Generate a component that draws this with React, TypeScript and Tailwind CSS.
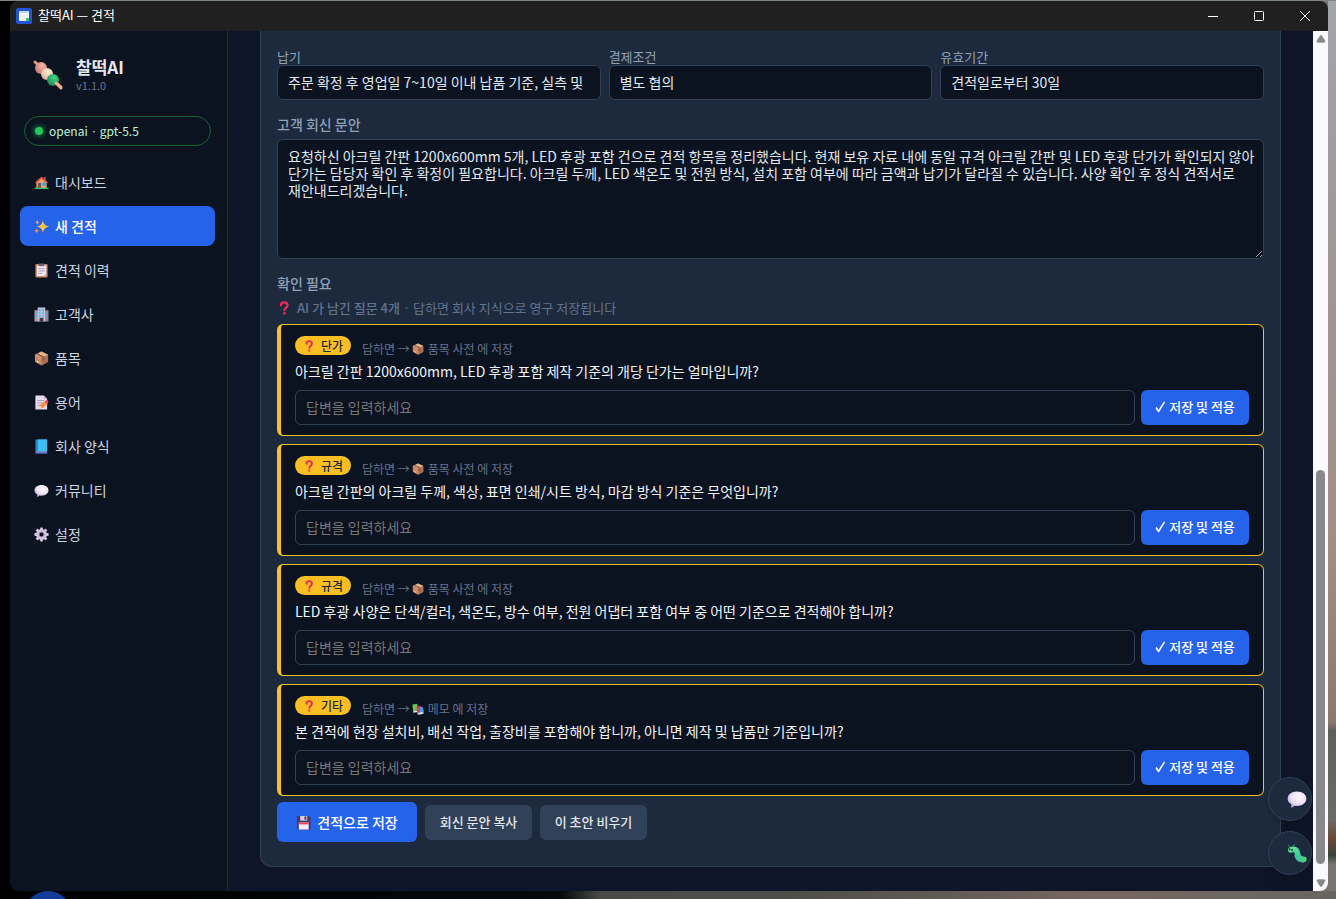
import React, { useState } from 'react';
import clsx from 'clsx';

type IconProps = { className?: string };

const HouseIcon = ({ className }: IconProps) => (
    <svg viewBox="0 0 32 32" className={className} aria-hidden="true">
        <rect x="21" y="4" width="4" height="9" fill="#8d5b4c" />
        <path d="M5 14 16 5l11 9v14H5z" fill="#e8a66f" />
        <path d="M2 16 16 3l14 13-2 2L16 8 4 18z" fill="#e5484d" />
        <rect x="8" y="17" width="7" height="11" fill="#7c5147" />
        <rect x="18" y="16" width="7" height="7" fill="#2ea8f5" />
        <rect x="1" y="27" width="30" height="3" fill="#35c46b" />
    </svg>
);

const SparklesIcon = ({ className }: IconProps) => (
    <svg viewBox="0 0 32 32" className={className} aria-hidden="true">
        <path d="M19 2c1.500 9 4 11.500 13 14-9 2.500-11.500 5-13 14-1.500-9-4-11.500-13-14 9-2.500 11.500-5 13-14z" fill="#ffc24b" />
        <path d="M7 1c.7 4 2 5 5 6-3 1-4.300 2-5 6-.7-4-2-5-5-6 3-1 4.300-2 5-6z" fill="#ff9a5c" />
        <path d="M6 19c.7 4 2 5 6 6-4 1-5.300 2-6 6-.7-4-2-5-6-6 4-1 5.300-2 6-6z" fill="#ff8a5c" />
    </svg>
);

const ClipboardIcon = ({ className }: IconProps) => (
    <svg viewBox="0 0 32 32" className={className} aria-hidden="true">
        <rect x="3" y="2" width="26" height="29" rx="2" fill="#c9835a" />
        <rect x="6" y="5" width="20" height="23" fill="#f0e8f8" />
        <rect x="10" y="1" width="12" height="6" rx="1" fill="#6a6078" />
        <path d="M9 12h14M9 17h14M9 22h9" stroke="#a79bb8" strokeWidth="2" />
        <path d="M20 28h6v-6z" fill="#c3b4d4" />
    </svg>
);

const OfficeIcon = ({ className }: IconProps) => (
    <svg viewBox="0 0 32 32" className={className} aria-hidden="true">
        <rect x="1" y="7" width="9" height="24" fill="#a89fb2" />
        <rect x="22" y="7" width="9" height="24" fill="#8e8699" />
        <rect x="8" y="1" width="16" height="30" fill="#c8bfd2" />
        <path d="M11 5h3v4h-3zM18 5h3v4h-3zM11 11h3v4h-3zM18 11h3v4h-3zM11 17h3v4h-3zM18 17h3v4h-3zM3 11h3v4H3zM26 11h3v4h-3zM3 18h3v4H3zM26 18h3v4h-3z" fill="#2fb4f3" />
        <rect x="12" y="23" width="8" height="8" fill="#403850" />
    </svg>
);

const PackageIcon = ({ className }: IconProps) => (
    <svg viewBox="0 0 32 32" className={className} aria-hidden="true">
        <path d="M16 1 30 8v15l-14 8L2 23V8z" fill="#c88b63" />
        <path d="M16 1 30 8l-14 7L2 8z" fill="#e6b48c" />
        <path d="M16 15 30 8v15l-14 8z" fill="#ad6f50" />
        <path d="m8 5 14 7v7l-4 2v-7L4 7z" fill="#8c5844" />
        <path d="m6 21 4 2v3l-4-2z" fill="#f4dfc9" />
    </svg>
);

const MemoIcon = ({ className }: IconProps) => (
    <svg viewBox="0 0 32 32" className={className} aria-hidden="true">
        <path d="M3 1h18l7 7v23H3z" fill="#e6dcef" />
        <path d="M21 1v7h7z" fill="#b5a8c4" />
        <path d="M7 12h15M7 17h14M7 22h9" stroke="#a99bb9" strokeWidth="2" />
        <path d="m11 29 3-8 11-9 5 5-11 10z" fill="#ff8b32" />
        <path d="m23 14 3-3c2-2 6 2 4 4l-3 3z" fill="#f0495c" />
        <path d="m11 29 2-6 4 4z" fill="#ffd09a" />
    </svg>
);

const BlueBookIcon = ({ className }: IconProps) => (
    <svg viewBox="0 0 32 32" className={className} aria-hidden="true">
        <path d="M3 1h25v30H3z" fill="#2587c7" />
        <path d="M8 1h20v25H8z" fill="#3fbdf5" />
        <path d="M4 26h24v3H4z" fill="#8f8fd0" />
        <path d="M4 29h24v2H4z" fill="#5563b8" />
    </svg>
);

const SpeechIcon = ({ className }: IconProps) => (
    <svg viewBox="0 0 32 32" className={className} aria-hidden="true">
        <defs>
            <radialGradient id="speech" cx="0.6" cy="0.35" r="0.7">
                <stop offset="0" stopColor="#fff8ff" />
                <stop offset="0.6" stopColor="#ede0f6" />
                <stop offset="1" stopColor="#b9a3d3" />
            </radialGradient>
        </defs>
        <path d="M16 4c9 0 15 5 15 11.500S25 27 16 27c-1.500 0-3 0-4.300-.4C10.500 28 8 29.500 6 29.500c1-1.500 1.300-3.500 1-5C3 22.500 1 19.500 1 15.500 1 9 7 4 16 4z" fill="url(#speech)" />
    </svg>
);

const GearIcon = ({ className }: IconProps) => (
    <svg viewBox="0 0 32 32" className={className} aria-hidden="true">
        <g fill="#cfc3dd">
            <rect x="13" y="1" width="6" height="30" rx="1" />
            <rect x="13" y="1" width="6" height="30" rx="1" transform="rotate(45 16 16)" />
            <rect x="13" y="1" width="6" height="30" rx="1" transform="rotate(90 16 16)" />
            <rect x="13" y="1" width="6" height="30" rx="1" transform="rotate(135 16 16)" />
        </g>
        <circle cx="16" cy="16" r="8" fill="none" stroke="#cfc3dd" strokeWidth="7" />
        <circle cx="16" cy="16" r="5" fill="#0b1220" stroke="#8f829f" strokeWidth="2" />
    </svg>
);

const QuestionIcon = ({ className }: IconProps) => (
    <svg viewBox="0 0 32 32" className={className} aria-hidden="true">
        <path d="M9 10c0-4 3-7 7.500-7S24 6 24 10c0 5-7 5.500-7 11" fill="none" stroke="#f0285a" strokeWidth="5" strokeLinecap="round" />
        <circle cx="17" cy="28" r="3" fill="#f0285a" />
    </svg>
);

const BooksIcon = ({ className }: IconProps) => (
    <svg viewBox="0 0 32 32" className={className} aria-hidden="true">
        <path d="M1 4 14 2l2 18-13 2z" fill="#62c554" />
        <path d="M3 22 16 20v4L4 26z" fill="#e9e2f2" />
        <path d="m12 9 11-2 3 17-12 2z" fill="#e5345f" />
        <path d="m21 11 8-1 3 18-10 2z" fill="#3f9fe8" />
        <path d="m14 26 14-2 1 5-13 2z" fill="#d9e7f5" />
    </svg>
);

const FloppyIcon = ({ className }: IconProps) => (
    <svg viewBox="0 0 32 32" className={className} aria-hidden="true">
        <path d="M2 2h26l3 3v26H2z" fill="#4b3b63" />
        <rect x="9" y="2" width="15" height="10" fill="#d8cfe2" />
        <rect x="18" y="3" width="4" height="7" fill="#4b3b63" />
        <rect x="6" y="16" width="21" height="15" fill="#f3ebfa" />
        <rect x="6" y="16" width="21" height="4" fill="#e8446e" />
    </svg>
);

const DangoIcon = ({ className }: IconProps) => (
    <svg viewBox="0 0 32 32" className={className} aria-hidden="true">
        <defs>
            <radialGradient id="dangoPink" cx="0.6" cy="0.3" r="0.8">
                <stop offset="0" stopColor="#f6b3a4" />
                <stop offset="1" stopColor="#c96f77" />
            </radialGradient>
            <radialGradient id="dangoCream" cx="0.6" cy="0.3" r="0.8">
                <stop offset="0" stopColor="#fff0cf" />
                <stop offset="1" stopColor="#d8a99a" />
            </radialGradient>
            <radialGradient id="dangoGreen" cx="0.6" cy="0.3" r="0.8">
                <stop offset="0" stopColor="#3ddc84" />
                <stop offset="1" stopColor="#1c7a55" />
            </radialGradient>
        </defs>
        <path d="M3 3 29 28" stroke="#dd9a78" strokeWidth="3" strokeLinecap="round" />
        <circle cx="9" cy="9" r="6" fill="url(#dangoPink)" />
        <circle cx="15" cy="15" r="6" fill="url(#dangoCream)" />
        <circle cx="21" cy="21" r="6" fill="url(#dangoGreen)" />
        <path d="m24 24 5 5" stroke="#f0b18d" strokeWidth="3" strokeLinecap="round" />
    </svg>
);

const BugIcon = ({ className }: IconProps) => (
    <svg viewBox="0 0 32 32" className={className} aria-hidden="true">
        <defs>
            <linearGradient id="bug" x1="0" y1="0" x2="1" y2="1">
                <stop offset="0" stopColor="#5ee08a" />
                <stop offset="0.6" stopColor="#3cc8a0" />
                <stop offset="1" stopColor="#4bd07c" />
            </linearGradient>
        </defs>
        <path d="M5 8 2 3M7 7l5-5" stroke="#3a8f78" strokeWidth="1.500" strokeLinecap="round" />
        <path d="M13 19c1 7 4 10 14 11" fill="none" stroke="#5a9fc9" strokeWidth="3" />
        <path d="M6 11c7-2 10 0 11 7 1 6 4 8 10 8" fill="none" stroke="url(#bug)" strokeWidth="9" strokeLinecap="round" />
        <circle cx="4" cy="10" r="1.500" fill="#1e293b" />
        <circle cx="8" cy="11" r="1.500" fill="#1e293b" />
    </svg>
);

const CheckIcon = ({ className }: IconProps) => (
    <svg viewBox="0 0 10 12" className={className} fill="none" stroke="currentColor" strokeLinejoin="round" aria-hidden="true">
        <path d="M1 6.500 3.500 10.500 9.500 1" strokeWidth="1.500" />
    </svg>
);

const menus = [
    { name: '대시보드', icon: HouseIcon },
    { name: '새 견적', icon: SparklesIcon },
    { name: '견적 이력', icon: ClipboardIcon },
    { name: '고객사', icon: OfficeIcon },
    { name: '품목', icon: PackageIcon },
    { name: '용어', icon: MemoIcon },
    { name: '회사 양식', icon: BlueBookIcon },
    { name: '커뮤니티', icon: SpeechIcon },
    { name: '설정', icon: GearIcon },
];

const terms = [
    { id: 'delivery', label: '납기', value: '주문 확정 후 영업일 7~10일 이내 납품 기준, 실측 및' },
    { id: 'payment', label: '결제조건', value: '별도 협의' },
    { id: 'validity', label: '유효기간', value: '견적일로부터 30일' },
];

const replyText =
    '요청하신 아크릴 간판 1200x600mm 5개, LED 후광 포함 건으로 견적 항목을 정리했습니다. 현재 보유 자료 내에 동일 규격 아크릴 간판 및 LED 후광 단가가 확인되지 않아 단가는 담당자 확인 후 확정이 필요합니다. 아크릴 두께, LED 색온도 및 전원 방식, 설치 포함 여부에 따라 금액과 납기가 달라질 수 있습니다. 사양 확인 후 정식 견적서로 재안내드리겠습니다.';

interface Question {
    id: string;
    tag: string;
    target: string;
    icon: React.FC<IconProps>;
    text: string;
}

const questions: Question[] = [
    { id: 'q1', tag: '단가', target: '품목 사전 에 저장', icon: PackageIcon, text: '아크릴 간판 1200x600mm, LED 후광 포함 제작 기준의 개당 단가는 얼마입니까?' },
    { id: 'q2', tag: '규격', target: '품목 사전 에 저장', icon: PackageIcon, text: '아크릴 간판의 아크릴 두께, 색상, 표면 인쇄/시트 방식, 마감 방식 기준은 무엇입니까?' },
    { id: 'q3', tag: '규격', target: '품목 사전 에 저장', icon: PackageIcon, text: 'LED 후광 사양은 단색/컬러, 색온도, 방수 여부, 전원 어댑터 포함 여부 중 어떤 기준으로 견적해야 합니까?' },
    { id: 'q4', tag: '기타', target: '메모 에 저장', icon: BooksIcon, text: '본 견적에 현장 설치비, 배선 작업, 출장비를 포함해야 합니까, 아니면 제작 및 납품만 기준입니까?' },
];

const TitleBar = () => (
    <header className="flex h-[30px] shrink-0 items-center bg-[#202020] pl-1.5 text-white">
        <svg viewBox="0 0 16 16" className="h-4 w-4" aria-hidden="true">
            <rect width="16" height="16" rx="2" fill="#2355d8" />
            <rect x="3" y="3" width="10" height="10" rx="1" fill="#f1f5fb" />
            <rect x="3" y="3" width="10" height="2" fill="#c7d7f7" />
            <rect x="10" y="10" width="3" height="3" fill="#35c46b" />
        </svg>
        <span className="ml-1.5 pb-0.5 text-[13px]">찰떡AI — 견적</span>
        <div className="ml-auto flex h-full">
            <button type="button" aria-label="최소화" className="flex w-[46px] items-center justify-center">
                <svg viewBox="0 0 10 10" className="h-2.5 w-2.5" stroke="white"><path d="M0 5.500h10" /></svg>
            </button>
            <button type="button" aria-label="최대화" className="flex w-[46px] items-center justify-center">
                <svg viewBox="0 0 10 10" className="h-2.5 w-2.5" fill="none" stroke="white"><rect x="0.500" y="0.500" width="9" height="9" rx="1" /></svg>
            </button>
            <button type="button" aria-label="닫기" className="flex w-[46px] items-center justify-center">
                <svg viewBox="0 0 10 10" className="h-2.5 w-2.5" stroke="white"><path d="m0 0 10 10M10 0 0 10" /></svg>
            </button>
        </div>
    </header>
);

const Sidebar = () => {
    const [active, setActive] = useState('새 견적');

    return (
        <aside className="w-[218px] shrink-0 border-r border-[#1e293b] bg-[#0b1220] pr-3 pl-2.5">
            <div className="flex items-start px-3 pt-6">
                <DangoIcon className="mt-1 h-8 w-8" />
                <div className="ml-3">
                    <div className="text-[17px] leading-6 font-bold text-slate-200">찰떡AI</div>
                    <div className="text-[11px] leading-3 text-slate-500">v1.1.0</div>
                </div>
            </div>
            <div className="mx-1 mt-[25px] flex h-[30px] items-center rounded-full border border-[#166534] px-2.5 text-xs text-[#bbf7d0]">
                <span className="h-2 w-2 rounded-full bg-[#22c55e] shadow-[0_0_6px_#22c55e]" />
                <span className="ml-1.5">openai · gpt-5.5</span>
            </div>
            <nav className="mt-4 flex flex-col gap-1">
                {menus.map(({ name, icon: Icon }) => (
                    <a
                        key={name}
                        href="#"
                        onClick={() => setActive(name)}
                        className={clsx(
                            'flex h-10 items-center gap-1.5 rounded-lg px-3.5 text-sm',
                            active === name ? 'bg-[#2563eb] font-medium text-white' : 'text-slate-300'
                        )}
                    >
                        <Icon className="h-[15px] w-[15px]" />
                        {name}
                    </a>
                ))}
            </nav>
        </aside>
    );
};

const QuestionCard = ({ question }: { question: Question }) => {
    const [answer, setAnswer] = useState('');
    const Icon = question.icon;

    return (
        <li className="rounded-md border border-l-4 border-[#fbbf24] bg-[#0b1220] px-3.5 pt-[11px] pb-2.5">
            <div className="flex h-6 items-start">
                <span className="flex h-[19px] w-14 items-center gap-1.5 rounded-full bg-[#fbbf24] pl-2 text-xs font-medium text-[#1e293b]">
                    <QuestionIcon className="h-3 w-3" />
                    {question.tag}
                </span>
                <span className="ml-[11px] flex items-center self-end text-xs leading-[22px] text-slate-500">
                    답하면 →
                    <Icon className="mr-1 ml-0.5 h-3 w-3" />
                    {question.target}
                </span>
            </div>
            <label htmlFor={question.id} className="mb-2 block text-sm leading-[22px] text-slate-100">{question.text}</label>
            <div className="flex gap-1.5">
                <input
                    id={question.id}
                    value={answer}
                    onChange={(e) => setAnswer(e.target.value)}
                    placeholder="답변을 입력하세요"
                    className="h-[35px] min-w-0 flex-1 rounded-md border border-slate-700 bg-[#0b1220] px-2.5 pb-0.5 text-sm text-slate-200 placeholder:text-[#757575]"
                />
                <button type="button" className="flex h-[35px] w-[108px] items-center justify-center gap-1 rounded-md bg-[#2563eb] pb-0.5 text-[13px] font-medium text-white">
                    <CheckIcon className="h-3 w-2.5" />
                    저장 및 적용
                </button>
            </div>
        </li>
    );
};

const QuoteForm = () => {
    const [reply, setReply] = useState(replyText);

    return (
        <form onSubmit={(e) => e.preventDefault()} className="rounded-b-xl border border-t-0 border-slate-700 bg-slate-800 px-4 pt-[18px] pb-6">
            <div className="grid grid-cols-3 gap-2">
                {terms.map(term => (
                    <div key={term.id}>
                        <label htmlFor={term.id} className="block text-[13px] leading-4 text-slate-400">{term.label}</label>
                        <input
                            id={term.id}
                            defaultValue={term.value}
                            className="h-[35px] w-full rounded-md border border-slate-700 bg-[#0b1220] px-2.5 pb-0.5 text-sm text-slate-200"
                        />
                    </div>
                ))}
            </div>

            <label htmlFor="reply" className="mt-3 mb-[3px] block text-sm leading-6 font-medium text-slate-400">고객 회신 문안</label>
            <textarea
                id="reply"
                value={reply}
                onChange={(e) => setReply(e.target.value)}
                className="block h-[120px] w-full resize-y rounded-md border border-slate-700 bg-[#0b1220] py-2 pr-1.5 pl-2.5 text-sm leading-[17px] break-keep text-slate-200"
            />

            <h3 className="mt-3 text-sm leading-6 font-medium text-slate-400">확인 필요</h3>
            <p className="mb-[3px] flex items-center text-[13px] leading-[26px] text-slate-500">
                <QuestionIcon className="mr-1.5 h-3.5 w-3.5" />
                <span className="whitespace-pre"><b className="font-medium">AI 가 남긴 질문 4개</b> · 답하면 회사 지식으로 영구 저장됩니다</span>
            </p>
            <ul className="flex flex-col gap-2">
                {questions.map(question => (
                    <QuestionCard key={question.id} question={question} />
                ))}
            </ul>

            <div className="mt-1.5 flex items-center gap-2">
                <button type="submit" className="flex h-10 w-[140px] items-center justify-center gap-1.5 rounded-md bg-[#2563eb] text-sm font-medium text-white">
                    <FloppyIcon className="h-[15px] w-[15px]" />
                    견적으로 저장
                </button>
                <button type="button" className="h-[35px] w-[107px] rounded-md bg-slate-700 text-[13px] font-medium text-slate-200">회신 문안 복사</button>
                <button type="button" className="h-[35px] w-[107px] rounded-md bg-slate-700 text-[13px] font-medium text-slate-200">이 초안 비우기</button>
            </div>
        </form>
    );
};

const ScrollBar = () => (
    <div className="flex w-[15px] shrink-0 flex-col items-center bg-[#fbf9fd] py-1">
        <svg viewBox="0 0 10 8" className="h-2 w-2.5" fill="#8b888b" aria-hidden="true"><path d="M5 0c1 0 4.500 6 4.500 7S.5 8 .5 7 4 0 5 0z" /></svg>
        <div className="flex w-[9px] flex-1 flex-col justify-end pb-[15px]">
            <div className="h-[48%] rounded-full bg-[#8b888b]" />
        </div>
        <svg viewBox="0 0 10 8" className="h-2 w-2.5" fill="#8b888b" aria-hidden="true"><path d="M5 8c-1 0-4.500-6-4.500-7S9.500 0 9.500 1 6 8 5 8z" /></svg>
    </div>
);

const App = () => {
    return (
        <div className="flex min-h-screen flex-col bg-black font-['Noto_Sans_CJK_KR','Noto_Sans',sans-serif]">
            <div className="h-px bg-[#7b8586]" />
            <div className="flex flex-1 bg-[linear-gradient(to_right,#000_50%,#77736f_50%)]">
                <div className="w-2.5 shrink-0 bg-black" />
                <div className="flex min-w-0 flex-1 flex-col overflow-hidden rounded-lg">
                    <TitleBar />
                    <div className="flex flex-1">
                        <Sidebar />
                        <main className="relative min-w-0 flex-1 bg-[#0f1528] px-8 pb-6">
                            <QuoteForm />
                            <div className="absolute right-px bottom-4 flex flex-col gap-2.5">
                                <button type="button" aria-label="채팅" className="flex h-11 w-11 items-center justify-end rounded-full border border-slate-700 bg-slate-800 pr-1 shadow-lg">
                                    <SpeechIcon className="h-5 w-5" />
                                </button>
                                <button type="button" aria-label="버그 신고" className="flex h-11 w-11 items-center justify-end rounded-full border border-slate-700 bg-slate-800 pr-1 shadow-lg">
                                    <BugIcon className="h-5 w-5" />
                                </button>
                            </div>
                        </main>
                        <ScrollBar />
                    </div>
                </div>
                <div className="w-2 shrink-0 bg-[linear-gradient(to_bottom,#a3a4ab_0%,#a0989a_25%,#a18f86_60%,#8d786f_81%,#5f5f5b_82%,#6b6b66_92%,#6d4a3a_94%,#3b4438_96%,#77776f_97%)]" />
            </div>
            <div className="flex h-2 overflow-hidden bg-[linear-gradient(to_right,#000_0%,#050a0a_42%,#4a4b47_45%,#4f4f4a_60%,#75675f_82%,#66665f_100%)] pl-6">
                <div className="h-12 w-12 shrink-0 rounded-full bg-[#123c98]" />
            </div>
        </div>
    );
};

export default App;
